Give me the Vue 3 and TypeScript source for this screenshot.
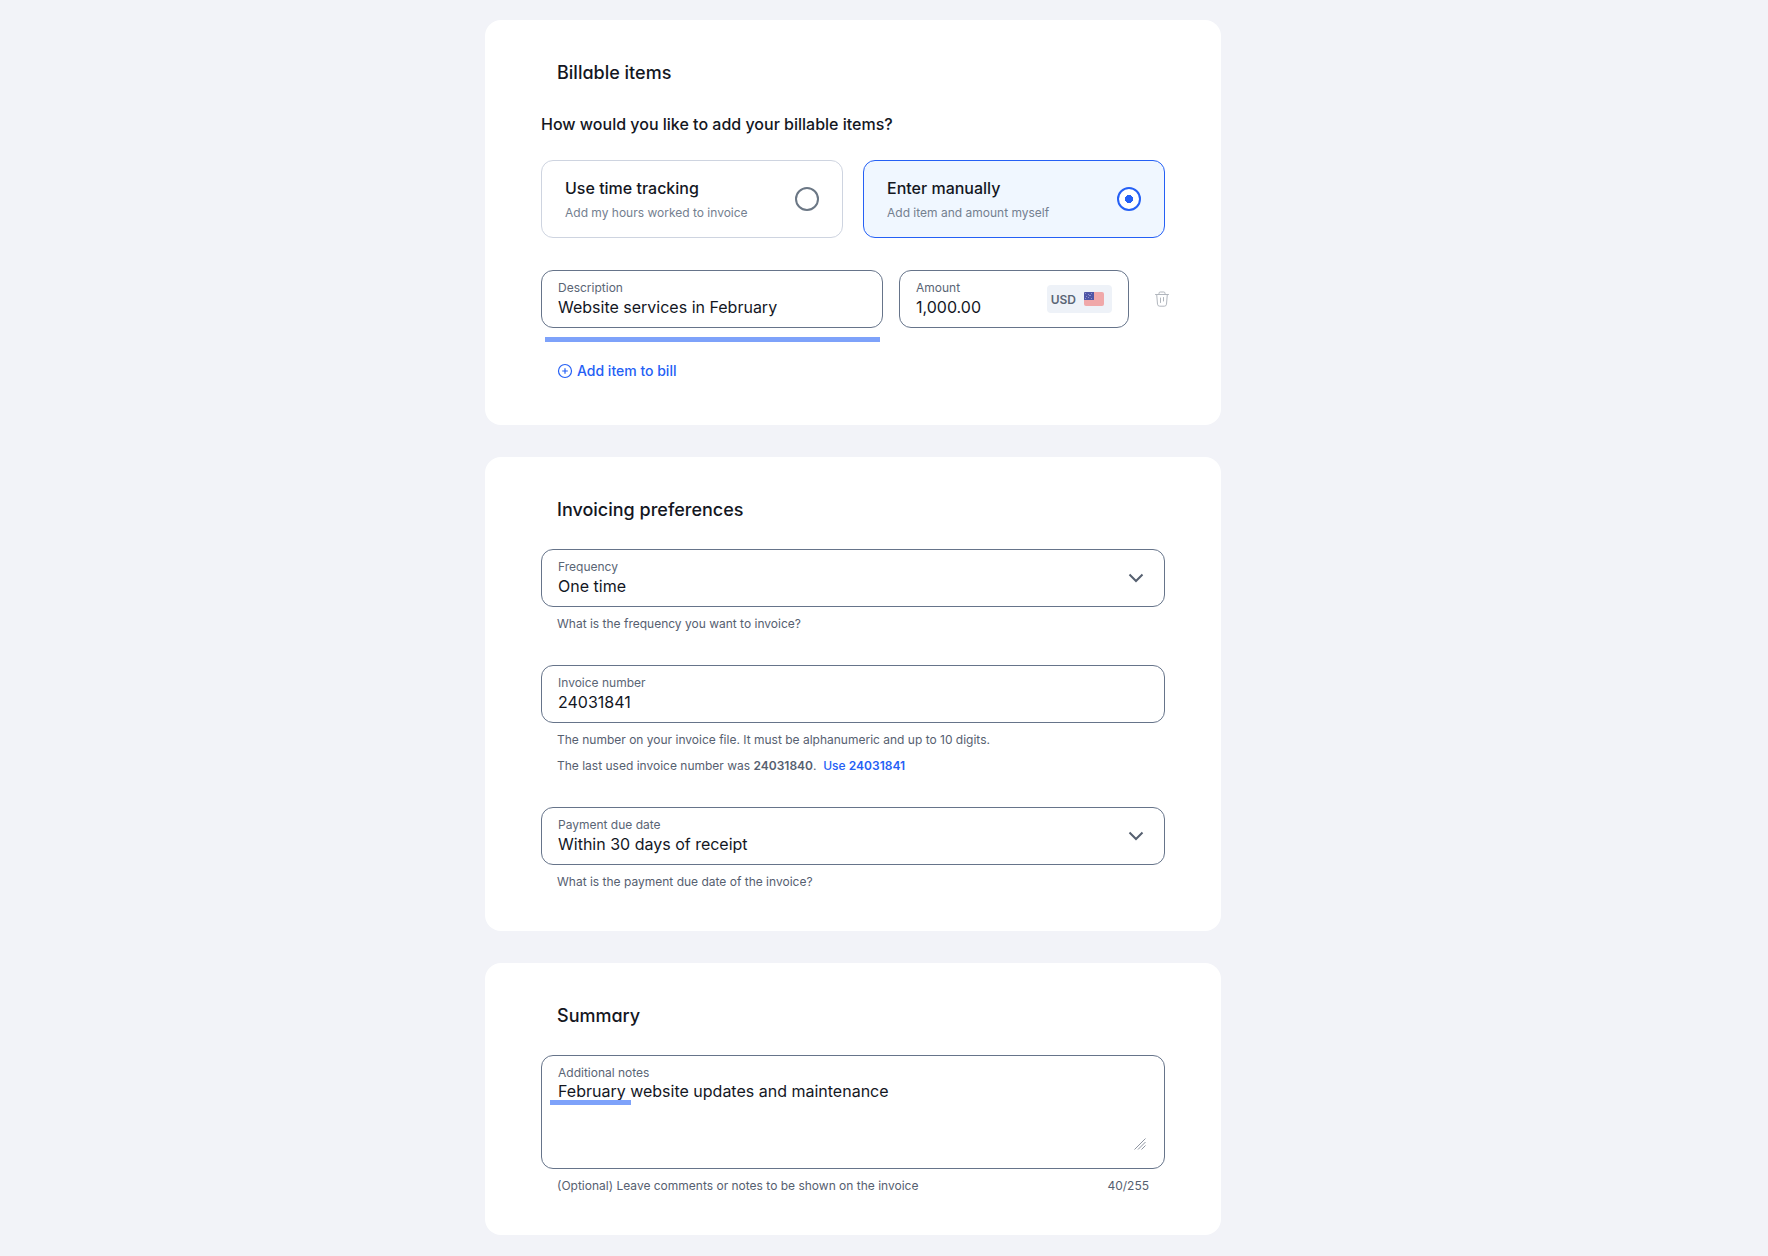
<script setup lang="ts">
import { computed, ref } from 'vue'

interface BillingMode {
  id: string
  title: string
  hint: string
}

const modes: BillingMode[] = [
  { id: 'tracking', title: 'Use time tracking', hint: 'Add my hours worked to invoice' },
  { id: 'manual', title: 'Enter manually', hint: 'Add item and amount myself' },
]

const mode = ref('manual')
const description = ref('Website services in February')
const amount = ref('1,000.00')
const frequency = ref('One time')
const invoiceNumber = ref('24031841')
const dueDate = ref('Within 30 days of receipt')
const notes = ref('February website updates and maintenance')

const noteLimit = 255
const noteCount = computed(() => `${notes.value.length}/${noteLimit}`)
</script>

<template>
  <main class="page">
    <section class="card">
      <h2 class="heading">Billable items</h2>
      <fieldset class="modes">
        <legend class="question">How would you like to add your billable items?</legend>
        <div class="mode-grid">
          <label v-for="m in modes" :key="m.id" class="mode" :class="{ selected: mode === m.id }">
            <span class="mode-text">
              <span class="mode-title">{{ m.title }}</span>
              <span class="mode-hint">{{ m.hint }}</span>
            </span>
            <input v-model="mode" class="radio" type="radio" name="mode" :value="m.id" />
          </label>
        </div>
      </fieldset>

      <div class="item-row">
        <div class="field">
          <div class="field-body">
            <label class="label" for="description">Description</label>
            <input id="description" v-model="description" class="control" type="text" />
          </div>
          <span class="marker marker-field"></span>
        </div>
        <div class="field amount">
          <div class="field-body">
            <label class="label" for="amount">Amount</label>
            <input id="amount" v-model="amount" class="control" type="text" />
          </div>
          <span class="currency">
            USD
            <svg class="flag" width="20" height="14" viewBox="0 0 20 14" aria-hidden="true">
              <rect width="20" height="14" rx="2" fill="#f0a8a9" />
              <path d="M1 0h9v8H0V1a1 1 0 0 1 1-1z" fill="#4f56a6" />
              <path d="M1 1.500h1M4 2.500h1M7 1.500h1M2 4.500h1M5 3.500h2M1 6.500h1M4 5.500h1M7 6.500h1" stroke="#8f93cb" />
            </svg>
          </span>
        </div>
        <button class="remove" type="button" aria-label="Remove item">
          <svg width="16" height="16" viewBox="0 0 16 16" fill="none" stroke="#b1b6bd" stroke-linecap="round" stroke-linejoin="round" aria-hidden="true">
            <path d="M1.500 3.500h13M5 3.500V2.300Q5 1 6.300 1h3.400Q11 1 11 2.300v1.200M2.700 3.500l.8 9.700q.2 2 2.200 2h4.600q2 0 2.200-2l.8-9.700" />
            <path d="M6.500 7v4.500M9.500 6.500v3.500" />
          </svg>
        </button>
      </div>

      <button class="add" type="button">
        <svg width="16" height="16" viewBox="0 0 16 16" fill="none" stroke="currentColor" aria-hidden="true">
          <circle cx="8" cy="8" r="6.500" stroke-width="1.200" />
          <path d="M8 5.200v5.600M5.200 8h5.600" stroke-width="1.200" />
        </svg>
        Add item to bill
      </button>
    </section>

    <section class="card">
      <h2 class="heading">Invoicing preferences</h2>
      <div class="stack">
        <div>
          <div class="field">
            <div class="field-body">
              <label class="label" for="frequency">Frequency</label>
              <select id="frequency" v-model="frequency" class="control">
                <option>One time</option>
              </select>
            </div>
            <svg class="chevron" width="16" height="16" viewBox="0 0 16 16" aria-hidden="true">
              <path d="M1.500 4.500L8 11l6.500-6.500" />
            </svg>
          </div>
          <p class="help">What is the frequency you want to invoice?</p>
        </div>
        <div>
          <div class="field">
            <div class="field-body">
              <label class="label" for="invoice-number">Invoice number</label>
              <input id="invoice-number" v-model="invoiceNumber" class="control" type="text" />
            </div>
          </div>
          <p class="help">The number on your invoice file. It must be alphanumeric and up to 10 digits.</p>
          <p class="help">
            The last used invoice number was <strong>24031840</strong>.&nbsp;
            <a class="use" href="#">Use <b>24031841</b></a>
          </p>
        </div>
        <div>
          <div class="field">
            <div class="field-body">
              <label class="label" for="due">Payment due date</label>
              <select id="due" v-model="dueDate" class="control">
                <option>Within 30 days of receipt</option>
              </select>
            </div>
            <svg class="chevron" width="16" height="16" viewBox="0 0 16 16" aria-hidden="true">
              <path d="M1.500 4.500L8 11l6.500-6.500" />
            </svg>
          </div>
          <p class="help">What is the payment due date of the invoice?</p>
        </div>
      </div>
    </section>

    <section class="card">
      <h2 class="heading">Summary</h2>
      <div class="field notes">
        <div class="field-body">
          <label class="label" for="notes">Additional notes</label>
          <textarea id="notes" v-model="notes" class="control area" spellcheck="false"></textarea>
        </div>
        <span class="marker marker-word"></span>
        <svg class="grip" width="12" height="12" viewBox="0 0 12 12" aria-hidden="true">
          <path d="M0.500 11.500l11-11M4 11.500L11.500 4M7.500 11.500l4-4" />
        </svg>
      </div>
      <div class="notes-foot">
        <p class="help">(Optional) Leave comments or notes to be shown on the invoice</p>
        <p class="help">{{ noteCount }}</p>
      </div>
    </section>
  </main>
</template>

<style>
body {
  margin: 0;
  background: #f2f3f8;
}
</style>

<style scoped>
.page,
.page * {
  box-sizing: border-box;
}
.page {
  display: flex;
  flex-direction: column;
  align-items: center;
  gap: 32px;
  padding: 20px 62px 20px 0;
  font-family: Inter, "Liberation Sans", sans-serif;
  color: #14171f;
}
button,
input,
select,
textarea {
  font-family: inherit;
  color: inherit;
}
button {
  border: 0;
  padding: 0;
  background: none;
  cursor: pointer;
}
.card {
  width: 100%;
  max-width: 736px;
  padding: 40px 56px;
  border-radius: 16px;
  background: #fff;
}
.heading {
  margin: 0 16px 26px;
  font-size: 18px;
  font-weight: 500;
  line-height: 26px;
  font-feature-settings: "cv11";
}
.modes {
  margin: 0 0 32px;
  padding: 0;
  border: 0;
  min-width: 0;
}
.question {
  padding: 0 0 24px;
  font-size: 16px;
  font-weight: 500;
  line-height: 24px;
}
.mode-grid {
  display: grid;
  grid-template-columns: 1fr 1fr;
  gap: 20px;
}
.mode {
  display: flex;
  align-items: center;
  justify-content: space-between;
  height: 78px;
  padding: 0 23px;
  border: 1px solid #ced4e0;
  border-radius: 12px;
  cursor: pointer;
}
.mode.selected {
  border-color: #2560f5;
  background: #f0f7ff;
}
.mode-text {
  display: flex;
  flex-direction: column;
  gap: 4px;
}
.mode-title {
  font-size: 16px;
  font-weight: 500;
  line-height: 24px;
}
.mode-hint {
  font-size: 12px;
  line-height: 18px;
  color: #74808f;
}
.radio {
  appearance: none;
  width: 24px;
  height: 24px;
  margin: 0;
  border: 2px solid #6b7785;
  border-radius: 50%;
  background: #fff;
}
.radio:checked {
  border-color: #2560f5;
  background: radial-gradient(circle, #2560f5 0 4px, #fff 4px);
}
.item-row {
  display: grid;
  grid-template-columns: minmax(0, 342fr) minmax(0, 230fr) 34px;
  align-items: center;
  gap: 16px;
  margin: 0 -14px 29px 0;
}
.field {
  position: relative;
  display: flex;
  align-items: center;
  min-height: 58px;
  padding: 0 20px 0 16px;
  border: 1px solid #66748a;
  border-radius: 12px;
  background: #fff;
}
.field.amount {
  padding-right: 16px;
}
.field-body {
  display: flex;
  flex: 1;
  flex-direction: column;
  min-width: 0;
  padding-bottom: 2px;
}
.label {
  font-size: 12px;
  line-height: 18px;
  color: #5a6575;
}
.control {
  appearance: none;
  display: block;
  width: 100%;
  height: 20px;
  margin: 0;
  padding: 0;
  border: 0;
  outline: 0;
  background: transparent;
  font-size: 16px;
  line-height: 20px;
}
.currency {
  display: flex;
  align-items: center;
  gap: 8px;
  height: 28px;
  padding: 0 8px 0 4px;
  border-radius: 4px;
  background: #eef2f8;
  font-size: 12px;
  font-weight: 600;
  color: #5a6575;
}
.remove {
  display: flex;
  align-items: center;
  justify-content: center;
  height: 34px;
}
.marker {
  position: absolute;
  height: 5px;
  background: #7ea2fa;
}
.marker-field {
  right: 2px;
  bottom: -15px;
  left: 3px;
}
.marker-word {
  top: 44px;
  left: 8px;
  width: 81px;
}
.add {
  display: flex;
  align-items: center;
  gap: 4px;
  margin-left: 16px;
  font-size: 14px;
  font-weight: 500;
  line-height: 28px;
  color: #2560f5;
}
.stack {
  display: flex;
  flex-direction: column;
  gap: 32px;
}
.chevron {
  fill: none;
  stroke: #566070;
  stroke-width: 2;
}
.help {
  margin: 8px 16px 0;
  font-size: 12px;
  line-height: 18px;
  color: #566070;
}
.help strong,
.help b {
  font-weight: 600;
}
.use {
  color: #2560f5;
  font-weight: 500;
  text-decoration: none;
}
.field.notes {
  align-items: flex-start;
  min-height: 114px;
  padding-top: 8px;
}
.area {
  height: 80px;
  line-height: 18px;
  resize: none;
}
.grip {
  position: absolute;
  right: 18px;
  bottom: 18px;
  fill: none;
  stroke: #8e95a1;
}
.notes-foot {
  display: flex;
  justify-content: space-between;
}
</style>
